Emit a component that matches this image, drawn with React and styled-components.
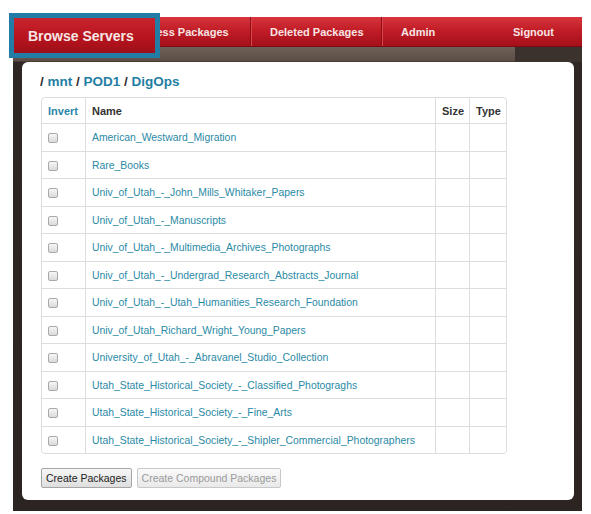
import React from "react";
import styled, { createGlobalStyle } from "styled-components";

const GlobalStyle = createGlobalStyle`
  html, body {
    margin: 0;
    padding: 0;
    background: #ffffff;
    font-family: "Liberation Sans", Arial, sans-serif;
  }
`;

const folders = [
  "American_Westward_Migration",
  "Rare_Books",
  "Univ_of_Utah_-_John_Mills_Whitaker_Papers",
  "Univ_of_Utah_-_Manuscripts",
  "Univ_of_Utah_-_Multimedia_Archives_Photographs",
  "Univ_of_Utah_-_Undergrad_Research_Abstracts_Journal",
  "Univ_of_Utah_-_Utah_Humanities_Research_Foundation",
  "Univ_of_Utah_Richard_Wright_Young_Papers",
  "University_of_Utah_-_Abravanel_Studio_Collection",
  "Utah_State_Historical_Society_-_Classified_Photograghs",
  "Utah_State_Historical_Society_-_Fine_Arts",
  "Utah_State_Historical_Society_-_Shipler_Commercial_Photographers",
];

const navItems = [
  { label: "Process Packages", width: 137, sep: false },
  { label: "Deleted Packages", width: 131, sep: true },
  { label: "Admin", width: 113, sep: true },
  { label: "Signout", width: 88, sep: false },
];

export default function App() {
  return (
    <>
      <GlobalStyle />
      <Page>
        <Frame>
          <Nav>
            <NavSpacer />
            {navItems.map((item) => (
              <NavItem key={item.label} $width={item.width} $sep={item.sep}>
                {item.label}
              </NavItem>
            ))}
            <ActiveTab>Browse Servers</ActiveTab>
          </Nav>
          <Panel>
            <Breadcrumb>
              / <Crumb>mnt</Crumb> / <Crumb>POD1</Crumb> / <Crumb>DigOps</Crumb>
            </Breadcrumb>
            <Table>
              <colgroup>
                <col style={{ width: 43 }} />
                <col style={{ width: 350 }} />
                <col style={{ width: 34 }} />
                <col style={{ width: 37 }} />
              </colgroup>
              <thead>
                <tr>
                  <Th $link>Invert</Th>
                  <Th>Name</Th>
                  <Th>Size</Th>
                  <Th>Type</Th>
                </tr>
              </thead>
              <tbody>
                {folders.map((name) => (
                  <tr key={name}>
                    <Td>
                      <Check type="checkbox" />
                    </Td>
                    <Td>
                      <FolderLink>{name}</FolderLink>
                    </Td>
                    <Td />
                    <Td />
                  </tr>
                ))}
              </tbody>
            </Table>
            <Actions>
              <Button>Create Packages</Button>
              <Button disabled>Create Compound Packages</Button>
            </Actions>
          </Panel>
        </Frame>
      </Page>
    </>
  );
}

const Page = styled.div`
  padding: 17px 9px 3px 13px;
`;

const Frame = styled.div`
  width: 569px;
  padding-bottom: 11px;
  background:
    linear-gradient(to right, rgba(0, 0, 0, 0) 502px, #3b312d 502px) 0 30px / 100% 15px no-repeat,
    linear-gradient(to bottom, #2f2723 0, #6f6058 30px, #5c4d46 44px, #2f2723 45px, #2c2421 100%);
`;

const Nav = styled.div`
  position: relative;
  display: flex;
  height: 30px;
  background: linear-gradient(to bottom, #d8343c 0%, #c11d27 45%, #a5101a 100%);
  border-bottom: 1px solid #7c0a12;
  box-sizing: border-box;
`;

const NavSpacer = styled.div`
  width: 100px;
`;

const NavItem = styled.div`
  width: ${(p) => p.$width}px;
  box-sizing: border-box;
  padding-left: 19px;
  border-left: ${(p) => (p.$sep ? "1px solid #8e0d16" : "none")};
  box-shadow: ${(p) => (p.$sep ? "inset 1px 0 0 #d9454d" : "none")};
  display: flex;
  align-items: center;
  color: #f8e4e4;
  font-family: "Liberation Sans", Arial, sans-serif;
  font-weight: bold;
  font-size: 11px;
  white-space: nowrap;
`;

const ActiveTab = styled.div`
  position: absolute;
  left: -4px;
  top: -4px;
  width: 141px;
  height: 35px;
  border: 5px solid #237ca6;
  background: linear-gradient(to bottom, #c8242d 0%, #b8141e 55%, #9e0f18 100%);
  display: flex;
  align-items: center;
  color: #f6e6e6;
  font-family: "Liberation Sans", Arial, sans-serif;
  font-weight: bold;
  font-size: 14px;
  text-indent: 14px;
`;

const Panel = styled.div`
  margin: 15px 8px 0 9px;
  background: #ffffff;
  border-radius: 6px;
  padding: 10px 18px 12px 18px;
`;

const Breadcrumb = styled.div`
  font-family: "Liberation Sans", Arial, sans-serif;
  font-weight: bold;
  font-size: 13.5px;
  line-height: 20px;
  color: #333;
  margin-bottom: 5px;
`;

const Crumb = styled.span`
  color: #1f7ea3;
`;

const Table = styled.table`
  width: 466px;
  border-collapse: separate;
  border-spacing: 0;
  border: 1px solid #dddddd;
  border-radius: 4px;
  margin-left: 1px;
  font-family: "Liberation Sans", Arial, sans-serif;
  font-size: 11px;
  table-layout: fixed;
`;

const Th = styled.th`
  height: 25px;
  padding: 0 6px;
  text-align: left;
  font-weight: bold;
  font-size: 11px;
  color: ${(p) => (p.$link ? "#2a86a8" : "#333")};
  border-left: 1px solid #dddddd;
  &:first-child {
    border-left: none;
  }
`;

const Td = styled.td`
  height: 27.5px;
  box-sizing: border-box;
  padding: 0 6px;
  border-top: 1px solid #dddddd;
  border-left: 1px solid #dddddd;
  vertical-align: middle;
  &:first-child {
    border-left: none;
  }
`;

const Check = styled.input`
  appearance: none;
  display: block;
  width: 10px;
  height: 10px;
  margin: 2px 0 0 0;
  border: 1px solid #a9a9a9;
  border-radius: 2px;
  background: linear-gradient(to bottom, #f6f6f6, #dadada);
  box-sizing: border-box;
`;

const FolderLink = styled.span`
  color: #2a8aa6;
  font-size: 10.4px;
  white-space: nowrap;
`;

const Actions = styled.div`
  display: flex;
  gap: 5px;
  margin-top: 14px;
  margin-left: 1px;
`;

const Button = styled.button`
  height: 20px;
  padding: 0 4px;
  font-family: "Liberation Sans", Arial, sans-serif;
  font-size: 10.5px;
  color: #222;
  border: 1px solid #a6a6a6;
  border-radius: 2px;
  background: linear-gradient(to bottom, #f7f7f7, #dedede);
  &:disabled {
    color: #9a9a9a;
    border-color: #c8c8c8;
    background: linear-gradient(to bottom, #fafafa, #e9e9e9);
  }
`;
